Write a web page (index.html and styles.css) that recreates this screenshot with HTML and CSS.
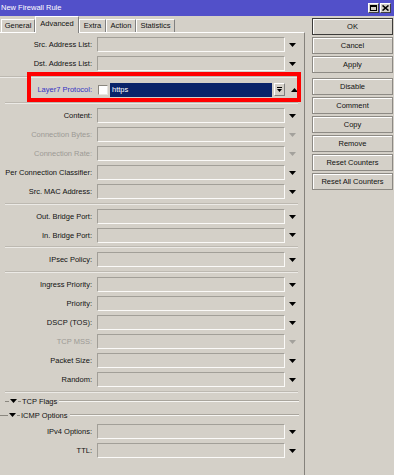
FILE: index.html
```html
<!DOCTYPE html>
<html>
  <head>
    <title>New Firewall Rule</title>
    <link rel="stylesheet" href="styles.css">
  </head>
  <body>
    <div class="titlebar">
      <span class="title">New Firewall Rule</span>
      <div class="winbtns">
        <span class="winbtn"><svg width="7" height="6" viewBox="0 0 7 6"><rect x="0.5" y="0.5" width="6" height="5" fill="none" stroke="#000"/><rect x="0" y="0" width="7" height="2" fill="#000"/></svg></span>
        <span class="winbtn"><svg width="7" height="6" viewBox="0 0 7 6"><path d="M0.5 0.5L6.5 5.5M6.5 0.5L0.5 5.5" stroke="#000" stroke-width="1.6"/></svg></span>
      </div>
    </div>

    <div class="main">
      <div class="left">
        <div class="tabs">
          <div class="tab t-general">General</div>
          <div class="tab t-advanced active">Advanced</div>
          <div class="tab t-extra">Extra</div>
          <div class="tab t-action">Action</div>
          <div class="tab t-stats">Statistics</div>
        </div>

        <div class="panel">
          <div class="row"><span class="label">Src. Address List:</span><span class="field"></span><svg class="arrow" viewBox="0 0 7 4"><polygon points="0,0 7,0 3.5,4"/></svg></div>
          <div class="row"><span class="label">Dst. Address List:</span><span class="field"></span><svg class="arrow" viewBox="0 0 7 4"><polygon points="0,0 7,0 3.5,4"/></svg></div>
          <div class="sep sep-full"></div>

          <div class="row hl">
            <span class="label blue">Layer7 Protocol:</span>
            <span class="check"></span>
            <span class="sel">https</span>
            <span class="smallbtn"><svg width="5" height="6" viewBox="0 0 5 6"><rect x="0" y="0" width="5" height="1" fill="#000"/><polygon points="0,2 5,2 2.5,5" fill="#000"/></svg></span>
            <svg class="arrow up" viewBox="0 0 7 4"><polygon points="0,4 7,4 3.5,0"/></svg>
            <div class="redbox"></div>
          </div>
          <div class="sep"></div>

          <div class="row"><span class="label">Content:</span><span class="field"></span><svg class="arrow" viewBox="0 0 7 4"><polygon points="0,0 7,0 3.5,4"/></svg></div>
          <div class="row off"><span class="label">Connection Bytes:</span><span class="field"></span><svg class="arrow" viewBox="0 0 7 4"><polygon points="0,0 7,0 3.5,4"/></svg></div>
          <div class="row off"><span class="label">Connection Rate:</span><span class="field"></span><svg class="arrow" viewBox="0 0 7 4"><polygon points="0,0 7,0 3.5,4"/></svg></div>
          <div class="row"><span class="label">Per Connection Classifier:</span><span class="field"></span><svg class="arrow" viewBox="0 0 7 4"><polygon points="0,0 7,0 3.5,4"/></svg></div>
          <div class="row"><span class="label">Src. MAC Address:</span><span class="field"></span><svg class="arrow" viewBox="0 0 7 4"><polygon points="0,0 7,0 3.5,4"/></svg></div>
          <div class="sep s6"></div>

          <div class="row"><span class="label">Out. Bridge Port:</span><span class="field"></span><svg class="arrow" viewBox="0 0 7 4"><polygon points="0,0 7,0 3.5,4"/></svg></div>
          <div class="row short"><span class="label">In. Bridge Port:</span><span class="field"></span><svg class="arrow" viewBox="0 0 7 4"><polygon points="0,0 7,0 3.5,4"/></svg></div>
          <div class="sep s6"></div>

          <div class="row"><span class="label">IPsec Policy:</span><span class="field"></span><svg class="arrow" viewBox="0 0 7 4"><polygon points="0,0 7,0 3.5,4"/></svg></div>
          <div class="sep s6"></div>

          <div class="row"><span class="label">Ingress Priority:</span><span class="field"></span><svg class="arrow" viewBox="0 0 7 4"><polygon points="0,0 7,0 3.5,4"/></svg></div>
          <div class="row"><span class="label">Priority:</span><span class="field"></span><svg class="arrow" viewBox="0 0 7 4"><polygon points="0,0 7,0 3.5,4"/></svg></div>
          <div class="row"><span class="label">DSCP (TOS):</span><span class="field"></span><svg class="arrow" viewBox="0 0 7 4"><polygon points="0,0 7,0 3.5,4"/></svg></div>
          <div class="row off"><span class="label">TCP MSS:</span><span class="field"></span><svg class="arrow" viewBox="0 0 7 4"><polygon points="0,0 7,0 3.5,4"/></svg></div>
          <div class="row"><span class="label">Packet Size:</span><span class="field"></span><svg class="arrow" viewBox="0 0 7 4"><polygon points="0,0 7,0 3.5,4"/></svg></div>
          <div class="row"><span class="label">Random:</span><span class="field"></span><svg class="arrow" viewBox="0 0 7 4"><polygon points="0,0 7,0 3.5,4"/></svg></div>
          <div class="sep s5"></div>

          <div class="grp tcp"><span class="dash first"></span><svg class="tri" viewBox="0 0 7 4"><polygon points="0,0 7,0 3.5,4"/></svg><span class="dash"></span><span class="name">TCP Flags</span><span class="line"></span></div>
          <div class="grp icmp"><span class="dash first"></span><svg class="tri" viewBox="0 0 7 4"><polygon points="0,0 7,0 3.5,4"/></svg><span class="dash"></span><span class="name">ICMP Options</span><span class="line"></span></div>

          <div class="row"><span class="label">IPv4 Options:</span><span class="field"></span><svg class="arrow" viewBox="0 0 7 4"><polygon points="0,0 7,0 3.5,4"/></svg></div>
          <div class="row"><span class="label">TTL:</span><span class="field"></span><svg class="arrow" viewBox="0 0 7 4"><polygon points="0,0 7,0 3.5,4"/></svg></div>
        </div>
      </div>

      <div class="buttons">
        <div class="btn default">OK</div>
        <div class="btn">Cancel</div>
        <div class="btn">Apply</div>
        <div class="spacer"></div>
        <div class="btn">Disable</div>
        <div class="btn">Comment</div>
        <div class="btn">Copy</div>
        <div class="btn">Remove</div>
        <div class="btn">Reset Counters</div>
        <div class="btn">Reset All Counters</div>
      </div>
    </div>
  </body>
</html>
```

FILE: styles.css
```css
body {margin:0; background:#d4d0c8; color:#111; font-family:"Liberation Sans", Arial, sans-serif; font-size:7.5px; overflow:hidden;}

/* title bar */
.titlebar {height:16px; background:#5250c9; color:#fff; display:flex; align-items:center; padding-left:1px;}
.title {flex:1; padding-bottom:1px;}
.winbtns {display:flex; gap:1px; margin-right:3px;}
.winbtn {width:11px; height:10px; box-sizing:border-box; background:#d4d0c8; border:1px solid; border-color:#fff #404040 #404040 #fff; display:flex; align-items:center; justify-content:center;}

.main {display:flex;}
.left {width:305px; flex:none;}

/* tabs */
.tabs {height:16px; display:flex; align-items:flex-end; padding-left:1px;}
.tab {height:13px; box-sizing:border-box; border:1px solid; border-bottom:none; border-color:#fff #808080 transparent #fff; text-align:center; line-height:11px; flex:none;}
.tab.active {height:17px; margin-bottom:-1px; background:#d4d0c8; position:relative; z-index:1; line-height:13px;}
.t-general {width:34px;}
.t-advanced {width:44px;}
.t-extra {width:27px;}
.t-action {width:30px;}
.t-stats {width:39px;}

.panel {height:443px; box-sizing:border-box; border-top:1px solid #fff; border-right:1px solid #85827c; padding-top:2px;}

/* rows */
.row {display:flex; align-items:center; height:19px;}
.row.short {height:18px;}
.label {width:92px; flex:none; text-align:right; white-space:nowrap;}
.field {margin-left:5px; width:188px; height:15px; box-sizing:border-box; border:1px solid; border-color:#a29f98 #fbfaf8 #fbfaf8 #a29f98; flex:none;}
.arrow {margin-left:4px; width:7px; height:4px; fill:#000; flex:none;}
.off .label {color:#9c9a95;}
.off .arrow {fill:#a3a19c;}

.sep {height:7px; display:flex; align-items:center; padding:0 6px 0 5px;}
.sep::before {content:""; flex:1; border-top:1px solid #bdb9b1; border-bottom:1px solid #eceae6;}
.sep-full {padding-left:0;}
.s6 {height:6px;}
.s5 {height:5px;}

/* layer7 row */
.hl {position:relative;}
.blue {color:#3434c4;}
.check {margin-left:6px; width:10px; height:10px; box-sizing:border-box; background:#fff; border:1px solid; border-color:#8a877f #e8e6e2 #e8e6e2 #8a877f; flex:none;}
.sel {margin-left:2px; width:162px; height:14px; box-sizing:border-box; background:#0a246a; color:#fff; padding-left:2px; line-height:13px; flex:none;}
.smallbtn {margin-left:2px; width:11px; height:13px; box-sizing:border-box; border:1px solid; border-color:#fff #808080 #808080 #fff; display:flex; align-items:center; justify-content:center; flex:none;}
.arrow.up {margin-left:6px;}
.redbox {position:absolute; left:27px; top:-8px; width:274px; height:30px; box-sizing:border-box; border:4px solid #f00; z-index:2;}

/* collapsible groups */
.grp {display:flex; align-items:center; height:14px; padding-right:5px;}
.grp.tcp {padding-left:5px;}
.dash {width:3px; border-top:1px solid #8a877f;}
.grp.tcp .first {width:4px;}
.grp.icmp .first {width:8px;}
.tri {width:7px; height:4px; margin:0 1px; fill:#000;}
.name {padding:0 2px 0 1px; white-space:nowrap;}
.line {flex:1; border-top:1px solid #a9a59d; border-bottom:1px solid #f6f5f2;}

/* right buttons */
.buttons {margin-left:7px; padding-top:2px; width:81px; display:flex; flex-direction:column; gap:2px;}
.btn {height:17px; box-sizing:border-box; border:1px solid #8d8a84; box-shadow:inset 1px 1px #fff; display:flex; align-items:center; justify-content:center; white-space:nowrap;}
.btn.default {border-color:#3c3b39;}
.spacer {height:1px;}
```
